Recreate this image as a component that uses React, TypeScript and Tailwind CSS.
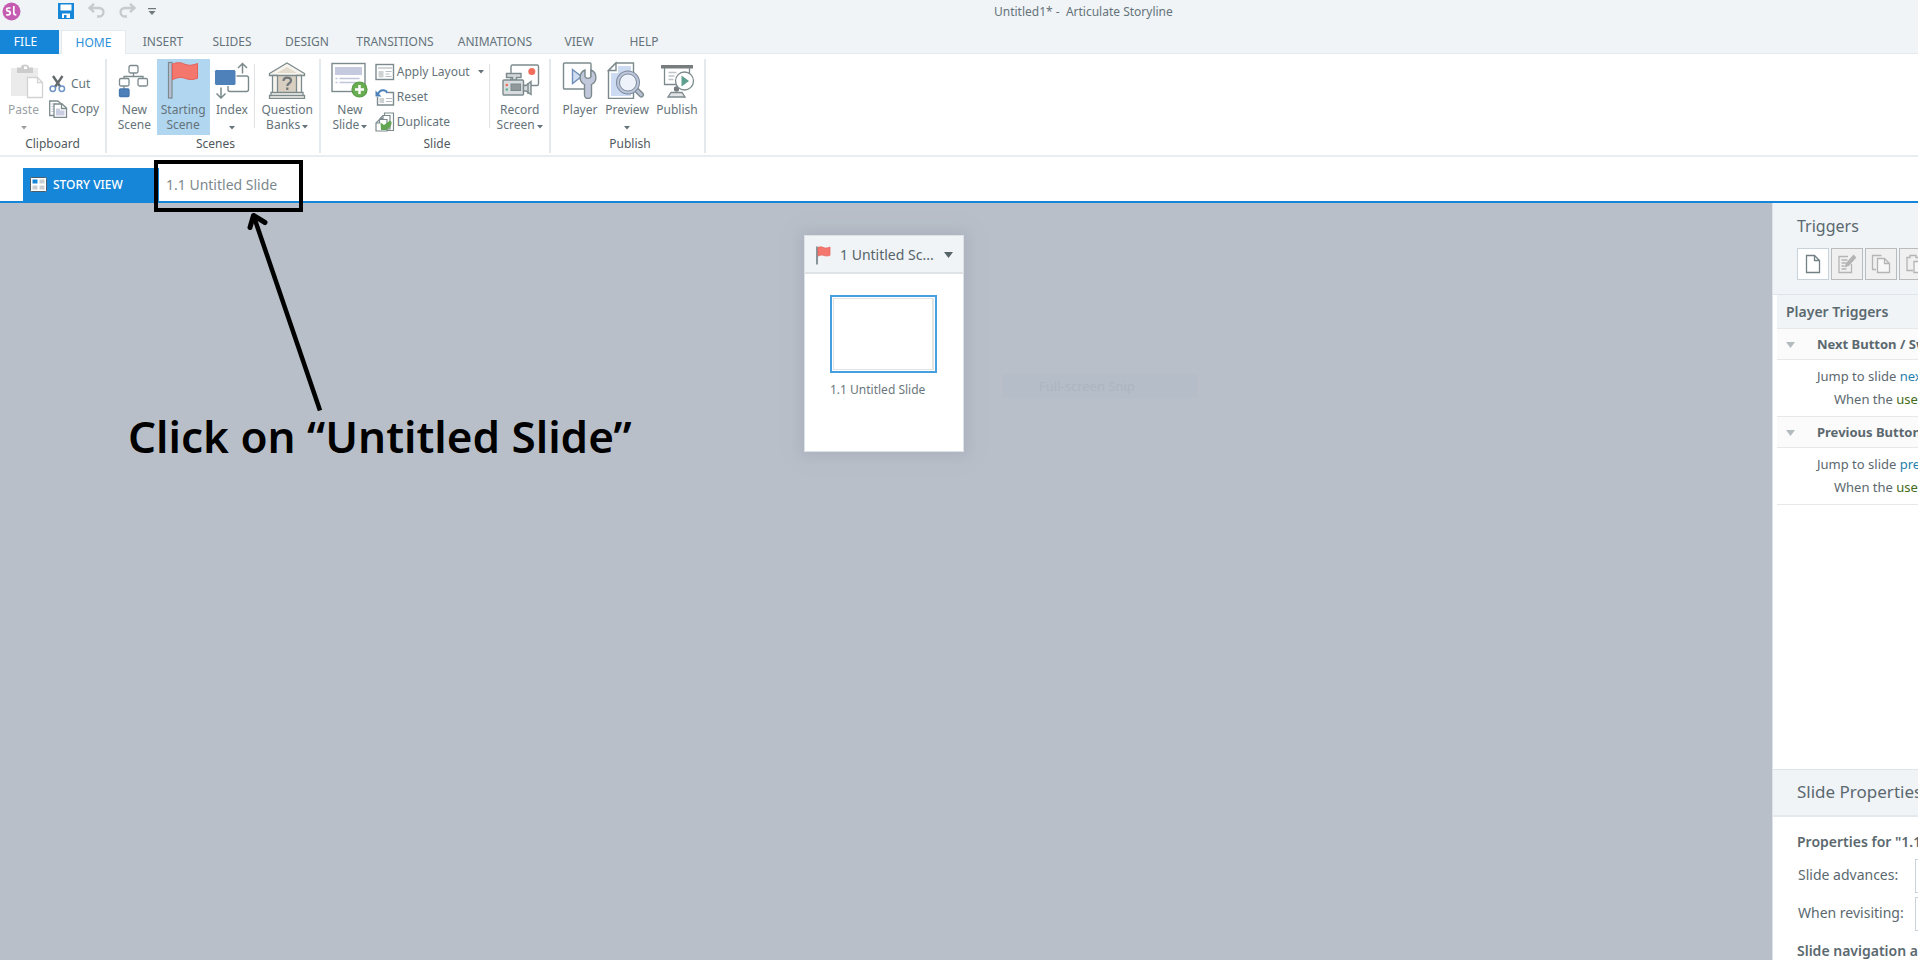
import type { ReactNode } from "react";

const GRAY = "#7c8a8e";

function PasteIcon() {
  return (
    <svg width="40" height="38" viewBox="0 0 40 38" fill="none" aria-hidden="true">
      <path d="M7 7h27v28H7z" fill="#ebebeb" />
      <path d="M13 6.500h4a4 3 0 0 1 8 0h4V12H13z" fill="#cccccc" />
      <rect x="20" y="5.500" width="3" height="2.500" fill="#fff" />
      <path d="M23.500 16.500h10l5 5v15h-15z" fill="#fff" stroke="#d2d2d2" strokeWidth="1.300" />
      <path d="M33.500 16.500v5h5" stroke="#d2d2d2" strokeWidth="1.300" />
    </svg>
  );
}

function CutIcon() {
  return (
    <svg width="18" height="18" viewBox="0 0 18 18" fill="none" aria-hidden="true">
      <path d="M4 1l7.500 11M13.500 1L6 12" stroke="#636a6c" strokeWidth="2.400" />
      <circle cx="3.800" cy="13.800" r="2.700" fill="#fff" stroke="#6c93c4" strokeWidth="1.500" />
      <circle cx="12.800" cy="13.800" r="2.700" fill="#fff" stroke="#6c93c4" strokeWidth="1.500" />
    </svg>
  );
}

function CopyIcon() {
  return (
    <svg width="20" height="18" viewBox="0 0 20 18" fill="none" aria-hidden="true">
      <path d="M.7 1h8l4 3v11.500H.7z" fill="#fff" stroke={GRAY} strokeWidth="1.300" />
      <path d="M2.500 4h4M2.500 6.500h3M2.500 9h3M2.500 11.500h3" stroke="#c0c6da" strokeWidth="1.200" />
      <path d="M5 4h8l4.500 4v9.300H5z" fill="#fff" stroke={GRAY} strokeWidth="1.300" />
      <path d="M12.500 4v4.500h5" stroke={GRAY} strokeWidth="1.300" />
      <path d="M7 8.500h4v2h4.500V15.500H7z" fill="#c8cde2" />
    </svg>
  );
}

function NewSceneIcon() {
  return (
    <svg width="40" height="38" viewBox="0 0 40 38" fill="none" stroke={GRAY} strokeWidth="1.300" aria-hidden="true">
      <path d="M19.500 12v3.500M10 18v-2.500h19V18M10 25v3" />
      <rect x="15" y="4.500" width="9" height="7.500" rx="1.500" fill="#fff" />
      <rect x="5.500" y="17.500" width="9.500" height="7.500" rx="1.500" fill="#fff" />
      <rect x="24" y="17.500" width="9.500" height="7.500" rx="1.500" fill="#fff" />
      <rect x="5.500" y="28" width="9.500" height="7.500" rx="1" fill="#4e81ba" stroke="#4576ae" />
    </svg>
  );
}

function FlagIcon({ small = false }: { small?: boolean }) {
  if (small) {
    return (
      <svg width="16" height="19" viewBox="0 0 16 19" fill="none" aria-hidden="true">
        <path d="M2 .5V18.500" stroke={GRAY} strokeWidth="1.800" />
        <path d="M3 1.500c3-1.200 4-.5 6 .2 2 .6 3.500.3 6-.7v8.300c-2.500.9-4 .9-6 .2-2-.6-3.500-.6-6 .6z" fill="#f3776d" stroke="#e5605a" strokeWidth=".7" />
      </svg>
    );
  }
  return (
    <svg width="40" height="38" viewBox="0 0 40 38" fill="none" aria-hidden="true">
      <rect x="5.500" y="1.500" width="3.500" height="35.500" fill="#b9bfd2" stroke={GRAY} strokeWidth="1.200" />
      <path d="M9.500 3c5-2 9-1.500 12.500.3 4 1.700 8 1 12.500-.8v14.800c-4.500 1.500-8 1.700-12 .2-4-1.500-8-1.500-13 1.300z" fill="#f3776d" stroke="#e5605a" strokeWidth="1" />
    </svg>
  );
}

function IndexIcon() {
  return (
    <svg width="40" height="38" viewBox="0 0 40 38" fill="none" aria-hidden="true">
      <rect x="16" y="15" width="20.500" height="15.500" rx="2" fill="#fff" stroke={GRAY} strokeWidth="1.400" />
      <rect x="2.500" y="8.500" width="21.500" height="16" rx="2" fill="#4e81ba" stroke="#fff" />
      <path d="M30.500 12.500V2.500M26 7l4.500-4.500L35 7M9 26.500V37M4.500 32.500L9 37l4.500-4.500" stroke={GRAY} strokeWidth="1.500" />
    </svg>
  );
}

function BankIcon() {
  return (
    <svg width="40" height="38" viewBox="0 0 40 38" fill="none" stroke={GRAY} strokeWidth="1.300" aria-hidden="true">
      <path d="M9 14h22v18H9z" fill="#d9cfc0" stroke="none" />
      <path d="M2.500 12.500L20 2l17.500 10.500v2h-35z" fill="#f7f4ee" />
      <path d="M10 12l10-6 10 6z" fill="#e3dbcd" stroke="none" />
      <path d="M5.500 14.500h5V32h-5zM29.500 14.500h5V32h-5z" fill="#f7f4ee" />
      <path d="M4 31.500h32v3H4zM2.500 34.500h35v3h-35z" fill="#f7f4ee" />
      <path d="M16.500 20c0-4.500 7.500-4.500 7.500-.5 0 3-3.700 2.500-3.700 5.500M20.300 26.500v2.500" stroke="#6f7679" strokeWidth="2.200" />
    </svg>
  );
}

function NewSlideIcon() {
  return (
    <svg width="40" height="38" viewBox="0 0 40 38" fill="none" aria-hidden="true">
      <rect x="2" y="2.500" width="33" height="28" fill="#fff" stroke={GRAY} strokeWidth="1.400" />
      <path d="M5 6h27v8H5z" fill="#c5cade" />
      <path d="M5.500 17.500h2M9.500 17.500h20M5.500 21.500h2M9.500 21.500h17" stroke="#c0c6da" strokeWidth="1.500" />
      <circle cx="29.500" cy="28.500" r="7.500" fill="#68ad52" stroke="#589a45" strokeWidth="1.200" />
      <path d="M29.500 24v9M25 28.500h9" stroke="#fff" strokeWidth="2.400" />
    </svg>
  );
}

function LayoutIcon() {
  return (
    <svg width="20" height="18" viewBox="0 0 20 18" fill="none" aria-hidden="true">
      <rect x="1" y="1.500" width="17.500" height="15" fill="#fff" stroke={GRAY} strokeWidth="1.400" />
      <path d="M3 4h14v2H3z" fill="#d2d5d6" />
      <path d="M3.500 8h5v6.500h-5z" fill="#cfd2d3" />
      <path d="M10.500 8.500h6M10.500 11h4M10.500 13.500h6" stroke="#b8bdbf" strokeWidth="1.200" />
    </svg>
  );
}

function ResetIcon() {
  return (
    <svg width="20" height="18" viewBox="0 0 20 18" fill="none" aria-hidden="true">
      <path d="M13 4.500h5.500V17h-16V9" fill="#fff" stroke={GRAY} strokeWidth="1.400" />
      <path d="M4.500 10h4.500v5H4.500z" fill="#cfd2d3" />
      <path d="M11 10.500h6M11 13.500h6" stroke="#b8bdbf" strokeWidth="1.200" />
      <path d="M2.500 7C4.500 1.500 10 .5 12.500 5" stroke="#4e81ba" strokeWidth="2" />
      <path d="M.5 2.500v6h6z" fill="#4e81ba" />
    </svg>
  );
}

function DuplicateIcon() {
  return (
    <svg width="20" height="20" viewBox="0 0 20 20" fill="none" stroke={GRAY} strokeWidth="1.200" aria-hidden="true">
      <path d="M9.500 1h9v17.500h-9z" fill="#fff" />
      <path d="M8 3.500h7V17H5V6.500z" fill="#fff" />
      <path d="M8 3.500v3H5" />
      <path d="M4.500 7.500H12V19H1V11z" fill="#fff" />
      <path d="M4.500 7.500V11H1" />
      <path d="M5.500 10.500l3.500 2.500 6-4.500 1.500 1.500c.5 3-1.500 6-5 8H6z" fill="#63a552" stroke="none" />
    </svg>
  );
}

function RecordIcon() {
  return (
    <svg width="40" height="38" viewBox="0 0 40 38" fill="none" stroke={GRAY} strokeWidth="1.400" aria-hidden="true">
      <rect x="11" y="4" width="27.500" height="20.500" rx="1.500" fill="#fff" />
      <circle cx="31.800" cy="10.500" r="3.500" fill="#f06c5b" stroke="none" />
      <path d="M6.500 12.500h14.500v4h-4.500v3h-4v-3h-6z" fill="#d5d8da" />
      <rect x="3" y="19" width="20.500" height="15" rx="1" fill="#d9dcde" />
      <path d="M23.500 24.500h2.500l5-4v13l-5-3.500h-2.500z" fill="#d9dcde" />
      <path d="M28 22v11" />
      <rect x="11" y="23" width="9.500" height="6.500" fill="#91989b" strokeWidth="1" />
      <circle cx="6.800" cy="24" r="1.300" fill="#f06c5b" stroke="none" />
      <circle cx="6.800" cy="28.500" r="1.300" fill="#58b591" stroke="none" />
    </svg>
  );
}

function PlayerIcon() {
  return (
    <svg width="40" height="38" viewBox="0 0 40 38" fill="none" stroke={GRAY} strokeWidth="1.400" aria-hidden="true">
      <rect x="3.500" y="2" width="27.500" height="26" rx="1" fill="#fff" />
      <path d="M12.500 8.500l9 7-9 7z" fill="#cfdcf1" stroke="#7190b8" />
      <path d="M25 9a8 8 0 0 0-.5 14.500V34a3.500 3.500 0 0 0 7 0V23.500A8 8 0 0 0 31 9v6.500c-1 2.500-5 2.500-6 0z" fill="#c2c8dc" />
    </svg>
  );
}

function PreviewIcon() {
  return (
    <svg width="40" height="38" viewBox="0 0 40 38" fill="none" stroke={GRAY} strokeWidth="1.400" aria-hidden="true">
      <path d="M9 2h17.500v35.500H1.500v-28z" fill="#fff" />
      <path d="M11 5h13v30H4V12h7z" fill="#cddbf2" stroke="none" />
      <path d="M9 2v7.500H1.500z" fill="#fff" />
      <path d="M26.500 29l3-3 6.500 6.500c1.500 2-1 4.500-3 3z" fill="#b9bfd2" />
      <circle cx="21" cy="21.500" r="10" fill="#eef3fb" stroke="#7c8a9a" strokeWidth="4" />
      <circle cx="21" cy="21.500" r="10" stroke="#bcc5da" strokeWidth="2" />
    </svg>
  );
}

function PublishIcon() {
  return (
    <svg width="40" height="38" viewBox="0 0 40 38" fill="none" stroke={GRAY} strokeWidth="1.300" aria-hidden="true">
      <path d="M7.500 7v16.500h25V7" fill="#fff" />
      <path d="M4 4h32v3.500H4z" fill="#777c7e" stroke="none" />
      <path d="M11.500 11.500h8M11.500 15h6M11.500 18.500h5" stroke="#c0c4c6" />
      <circle cx="19.500" cy="28" r="2" fill="#777c7e" stroke="#777c7e" />
      <path d="M14 31.500h11l3 4.500H11z" fill="#e2e4e5" />
      <circle cx="27.500" cy="20" r="9" fill="#fff" />
      <path d="M24.500 14.500l7.500 5.500-7.500 5.500z" fill="#5f9f8f" stroke="none" />
    </svg>
  );
}

function Caret({ className = "" }: { className?: string }) {
  return (
    <svg className={className} width="6" height="4" viewBox="0 0 6 4" aria-hidden="true">
      <path d="M0 0h6L3 3.500z" fill="currentColor" />
    </svg>
  );
}

function BigButton({ icon, lines, caret, className }: { icon: ReactNode; lines: string[]; caret?: "inline" | "below"; className: string }) {
  return (
    <button type="button" className={`flex h-[76px] flex-col items-center pt-0.5 leading-[15px] whitespace-nowrap ${className}`}>
      {icon}
      <span className="mt-[3px]">{lines[0]}</span>
      {lines[1] && (
        <span className="flex items-center gap-0.5">
          {lines[1]}
          {caret === "inline" && <Caret className="mt-1" />}
        </span>
      )}
      {caret === "below" && <Caret className="mt-[9px]" />}
    </button>
  );
}

function SmallButton({ icon, label, caret }: { icon: ReactNode; label: string; caret?: boolean }) {
  return (
    <button type="button" className="flex h-[25px] items-center whitespace-nowrap">
      <span className="flex w-[22px]">{icon}</span>
      {label}
      {caret && <Caret className="ml-2" />}
    </button>
  );
}

function Group({ label, className, children }: { label: string; className: string; children: ReactNode }) {
  return (
    <section aria-label={label} className={`flex flex-col border-r-2 border-[#e3e9ed] ${className}`}>
      <div className="flex h-[76px]">{children}</div>
      <div className="text-center leading-[17px] text-[#4f595c]">{label}</div>
    </section>
  );
}

const TABS = [
  { label: "INSERT", width: "w-[74px]" },
  { label: "SLIDES", width: "w-16" },
  { label: "DESIGN", width: "w-[86px]" },
  { label: "TRANSITIONS", width: "w-[90px]" },
  { label: "ANIMATIONS", width: "w-[110px]" },
  { label: "VIEW", width: "w-[58px]" },
  { label: "HELP", width: "w-[72px]" },
];

function TitleBar() {
  return (
    <header className="relative flex h-[30px] shrink-0 items-start pl-0.5">
      <svg className="mt-0.5" width="19" height="19" viewBox="0 0 19 19" fill="none" aria-hidden="true">
        <circle cx="9.500" cy="9.500" r="9" fill="#c55cb2" />
        <path d="M8.500 6H6.500C4 6 4 9 6.200 9.200 9 9.500 8.800 12.800 6 12.800H4.200M11.800 4v7c0 1.500 1 1.800 2.500 1.800" stroke="#fff" strokeWidth="1.700" />
      </svg>
      <button type="button" aria-label="Save" className="mt-[3px] ml-[37px]">
        <svg width="16" height="16" viewBox="0 0 16 16">
          <path d="M0 0h16v16H0z" fill="#1686d9" />
          <path d="M2.500 1.500h11v6h-11zM4 10.500h8V15H4z" fill="#fff" />
          <path d="M6 12h2.500v3H6z" fill="#1686d9" />
        </svg>
      </button>
      <button type="button" aria-label="Undo" className="mt-[3px] ml-3.5">
        <svg width="17" height="16" viewBox="0 0 17 16" fill="none" stroke="#c6cacc" strokeWidth="2.300">
          <path d="M6 .8L1.500 5 6 9.200M2 5h9c6 0 6 8.500 0 8.500H9" />
        </svg>
      </button>
      <button type="button" aria-label="Redo" className="mt-[3px] ml-3.5">
        <svg width="17" height="16" viewBox="0 0 17 16" fill="none" stroke="#c6cacc" strokeWidth="2.300">
          <path d="M11 .8L15.500 5 11 9.200M15 5H6C0 5 0 13.500 6 13.500h2" />
        </svg>
      </button>
      <button type="button" aria-label="Customize quick access" className="mt-2 ml-3 text-[#6f777a]">
        <svg width="8" height="7" viewBox="0 0 8 7" fill="currentColor">
          <path d="M0 0h8v1.200H0zM.5 3h7L4 7z" />
        </svg>
      </button>
      <h1 className="flex-1 pt-1 pl-[838px] text-xs leading-4 font-normal whitespace-pre">Untitled1* -  Articulate Storyline</h1>
    </header>
  );
}

function TabBar() {
  return (
    <nav className="flex h-6 shrink-0 border-b border-[#e3e9ed] text-xs">
      <button type="button" className="h-6 w-[59px] bg-[#1686d9] pr-2 text-white">FILE</button>
      <button type="button" className="ml-0.5 h-6 w-[65px] border-x border-t border-[#e3e9ed] bg-white text-[#2b8fda]">HOME</button>
      {TABS.map((tab) => (
        <button key={tab.label} type="button" className={`h-6 ${tab.width}`}>{tab.label}</button>
      ))}
    </nav>
  );
}

function Ribbon() {
  return (
    <div className="flex h-[103px] shrink-0 border-b-2 border-[#e8edf0] bg-white pt-[5px] pb-0.5 text-xs text-[#65737a]">
      <Group label="Clipboard" className="w-[107px]">
        <BigButton icon={<PasteIcon />} lines={["Paste"]} caret="below" className="w-[47px] text-[#9aa1a4]" />
        <div className="ml-0.5 pt-3">
          <SmallButton icon={<CutIcon />} label="Cut" />
          <SmallButton icon={<CopyIcon />} label="Copy" />
        </div>
      </Group>
      <Group label="Scenes" className="w-[214px] pl-[5px]">
        <BigButton icon={<NewSceneIcon />} lines={["New", "Scene"]} className="w-[45px]" />
        <BigButton icon={<FlagIcon />} lines={["Starting", "Scene"]} className="w-[53px] bg-[#b0d6f0]" />
        <BigButton icon={<IndexIcon />} lines={["Index"]} caret="below" className="w-[45px]" />
        <div className="mt-[5px] h-16 border-l border-[#dfe3e6]" />
        <BigButton icon={<BankIcon />} lines={["Question", "Banks"]} caret="inline" className="w-[64px]" />
      </Group>
      <Group label="Slide" className="w-[230px] pl-1">
        <BigButton icon={<NewSlideIcon />} lines={["New", "Slide"]} caret="inline" className="w-[50px]" />
        <div className="w-[115px]">
          <SmallButton icon={<LayoutIcon />} label="Apply Layout" caret />
          <SmallButton icon={<ResetIcon />} label="Reset" />
          <SmallButton icon={<DuplicateIcon />} label="Duplicate" />
        </div>
        <div className="mt-[5px] h-16 border-l border-[#dfe3e6]" />
        <BigButton icon={<RecordIcon />} lines={["Record", "Screen"]} caret="inline" className="w-[59px]" />
      </Group>
      <Group label="Publish" className="w-[155px] pl-[5px]">
        <BigButton icon={<PlayerIcon />} lines={["Player"]} className="w-12" />
        <BigButton icon={<PreviewIcon />} lines={["Preview"]} caret="below" className="w-[46px]" />
        <BigButton icon={<PublishIcon />} lines={["Publish"]} className="w-[54px]" />
      </Group>
    </div>
  );
}

function DocumentTabs() {
  return (
    <div className="flex h-[46px] shrink-0 items-end border-b-2 border-[#1686d9] bg-white pl-[23px]">
      <button type="button" className="flex h-[33px] w-[136px] items-center gap-1.5 bg-[#1686d9] pl-[7px] text-xs font-medium text-white">
        <svg width="17" height="15" viewBox="0 0 17 15" aria-hidden="true">
          <rect x=".5" y=".5" width="16" height="14" rx="1" fill="#fff" stroke="#4d5e69" />
          <path d="M2.500 2.500h5v4h-5z" fill="#1686d9" />
          <path d="M9.500 2.500h5v4h-5zM2.500 8.500h5v4h-5zM9.500 8.500h5v4h-5z" fill="#c9cdd0" />
        </svg>
        STORY VIEW
      </button>
      <button type="button" className="h-[33px] pl-[7px] text-sm text-[#7d888d]">1.1 Untitled Slide</button>
    </div>
  );
}

function SceneCanvas() {
  return (
    <main className="relative min-w-0 flex-1 overflow-hidden bg-[#b8bfc8]">
      <article className="absolute top-8 left-[804px] h-[217px] w-[160px] border border-[#dce1e6] bg-white shadow-[0_0_14px_3px_rgba(155,163,182,0.5)]">
        <header className="flex h-[38px] items-center border-b-2 border-[#dde3e7] bg-[#f0f4f7] pt-0.5 pl-2.5 text-sm text-[#56646a]">
          <FlagIcon small />
          <span className="ml-[9px] flex-1 whitespace-nowrap">1 Untitled Sc...</span>
          <button type="button" aria-label="Scene menu" className="mr-2.5">
            <svg width="9" height="6" viewBox="0 0 9 6"><path d="M0 0h9L4.500 6z" fill="#56646a" /></svg>
          </button>
        </header>
        <div className="pt-[21px] pl-[25px]">
          <div className="h-[78px] w-[107px] border-2 border-[#469fdf] p-px">
            <div className="h-full border border-r-2 border-[#e3e3e3] bg-white" />
          </div>
          <p className="mt-2 text-xs leading-[17px] text-[#6b777c]">1.1 Untitled Slide</p>
        </div>
      </article>
      <div className="absolute top-[171px] left-[1003px] h-6 w-[194px] bg-[#b5bdc8] pl-9 text-[13px] leading-6 text-[#adb5c0]">Full-screen Snip</div>
    </main>
  );
}

function ToolButton({ label, active, children }: { label: string; active?: boolean; children: ReactNode }) {
  return (
    <button type="button" aria-label={label} className={`flex size-8 shrink-0 items-center justify-center border ${active ? "border-[#c8d2da] bg-white" : "border-[#b9bcbe] bg-[#f0f0f0]"}`}>
      <svg width="20" height="20" viewBox="0 0 20 20" fill="none" stroke={active ? "#728084" : "#b4b4b4"} strokeWidth="1.300">{children}</svg>
    </button>
  );
}

function Trigger({ title, action, target }: { title: string; action: string; target: string }) {
  return (
    <section className="ml-1">
      <h3 className="flex h-8 items-center border-y border-[#e6e8ea] bg-[#fbfbfb] pt-px pl-[9px] text-[13px] font-bold">
        <svg className="mr-[22px] shrink-0" width="9" height="6" viewBox="0 0 9 6" aria-hidden="true"><path d="M0 0h9L4.500 6z" fill="#b3bbbf" /></svg>
        {title}
      </h3>
      <div className="h-14 pt-[5px] pl-10 text-[13px] leading-[23px]">
        <p>{action} <a href="#slide" className="text-[#257fae]">{target}</a></p>
        <p className="pl-[17px]">When the <a href="#user" className="text-[#466b16]">user clicks</a></p>
      </div>
    </section>
  );
}

function SidePanel() {
  return (
    <aside className="flex w-[146px] shrink-0 flex-col overflow-hidden border-l border-[#dce2e7] bg-white whitespace-nowrap text-[#5b696f]">
      <div className="h-[92px] shrink-0 border-b border-[#dfe5ea] bg-[#f0f4f7] pt-3 pl-6">
        <h2 className="text-base leading-[22px] font-normal">Triggers</h2>
        <div className="mt-[11px] flex gap-0.5">
          <ToolButton label="New trigger" active>
            <path d="M3.500 1.500h8l5 5v12h-13zM11.500 1.500v5h5" />
          </ToolButton>
          <ToolButton label="Edit trigger">
            <path d="M14.500 10v8.500H2v-16h9M4.500 6h6M4.500 9h5M4.500 12h3M4.500 15h5" />
            <path d="M8.500 12.500l1-3 7-8 2 2-7 8z" fill="#b4b4b4" />
          </ToolButton>
          <ToolButton label="Copy trigger">
            <path d="M5 15.500H1.500v-14h9" />
            <path d="M6.500 4.500h7l5 5v9h-12zM13.500 4.500v5h5" fill="#f7f7f7" />
          </ToolButton>
          <ToolButton label="Paste trigger">
            <path d="M8 16.500H2v-13h3v-2h6v2h3V7" />
            <path d="M9 7.500h5l4 4v7H9z" fill="#f7f7f7" />
          </ToolButton>
        </div>
      </div>
      <h2 className="ml-1 h-[33px] shrink-0 bg-[#f0f4f7] pt-px pl-[9px] text-sm leading-8 font-semibold">Player Triggers</h2>
      <Trigger title="Next Button / Swipe Next" action="Jump to slide" target="next slide" />
      <Trigger title="Previous Button / Swipe Previous" action="Jump to slide" target="previous slide" />
      <div className="ml-1 flex-1 border-t border-[#e6e8ea]" />
      <form className="h-[191px] shrink-0 border-t border-[#dfe5ea] text-sm">
        <h2 className="h-[47px] border-b-2 border-[#e3e9ed] bg-[#f0f4f7] pl-6 text-[17px] leading-[44px] font-normal">Slide Properties</h2>
        <h3 className="h-[42px] pt-2 pl-6 leading-[34px] font-semibold">Properties for "1.1 Untitled Slide"</h3>
        <div className="flex h-[38px] pl-[25px]">
          <label htmlFor="advances" className="w-[117px] shrink-0 leading-8">Slide advances:</label>
          <select id="advances" className="h-[34px] w-40 shrink-0 border border-[#ccd3d8] bg-white"><option>By user</option></select>
        </div>
        <div className="flex h-[38px] pl-[25px]">
          <label htmlFor="revisiting" className="w-[117px] shrink-0 leading-8">When revisiting:</label>
          <select id="revisiting" className="h-[34px] w-40 shrink-0 border border-[#ccd3d8] bg-white"><option>Automatically decide</option></select>
        </div>
        <h3 className="pl-6 leading-8 font-semibold">Slide navigation and gestures:</h3>
      </form>
    </aside>
  );
}

function Callout() {
  return (
    <div className="pointer-events-none absolute top-[160px] left-[128px] text-black">
      <div className="ml-[26px] h-[52px] w-[149px] border-4 border-black" />
      <svg className="ml-[104px]" width="100" height="199" viewBox="0 0 100 199" fill="none" stroke="#000" strokeWidth="4.500" aria-hidden="true">
        <path d="M88 198.500L21.500 3.500" />
        <path d="M18 15.500L21.500 3.500l11.500 7" strokeWidth="5" strokeLinecap="round" strokeLinejoin="round" />
      </svg>
      <p className="font-['Noto_Sans',sans-serif] text-[44px] leading-[50px] font-semibold whitespace-nowrap">Click on “Untitled Slide”</p>
    </div>
  );
}

export default function App() {
  return (
    <div className="relative flex h-screen flex-col overflow-hidden bg-[#f0f4f7] font-['Noto_Sans','Open_Sans',sans-serif] text-[#65737a]">
      <TitleBar />
      <TabBar />
      <Ribbon />
      <DocumentTabs />
      <div className="flex min-h-0 flex-1">
        <SceneCanvas />
        <SidePanel />
      </div>
      <Callout />
    </div>
  );
}
